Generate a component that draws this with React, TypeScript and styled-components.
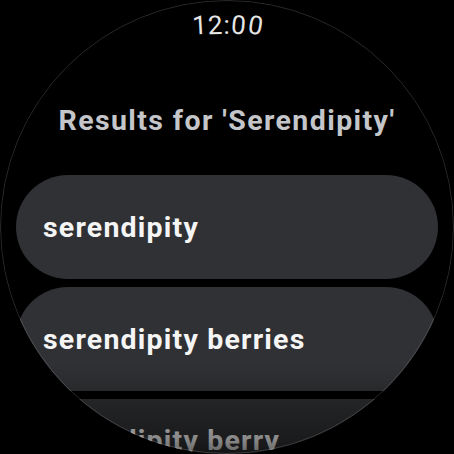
import React from 'react';
import styled, { createGlobalStyle } from 'styled-components';

const GlobalStyle = createGlobalStyle`
    html, body {
        margin: 0;
        padding: 0;
        background: #000;
    }
    body {
        font-family: Roboto, "Noto Sans", "Liberation Sans", sans-serif;
    }
`;

const Screen = styled.div`
    position: relative;
    width: 454px;
    height: 454px;
    border-radius: 50%;
    overflow: hidden;
    background: #000;
    display: flex;
    flex-direction: column;
    align-items: center;

    &::after {
        content: '';
        position: absolute;
        inset: 0;
        border-radius: 50%;
        border: 1px solid rgba(255, 255, 255, 0.16);
        pointer-events: none;
    }
`;

const Vignette = styled.div`
    position: absolute;
    inset: 0;
    pointer-events: none;
    background:
        linear-gradient(
            to bottom,
            rgba(0, 0, 0, 0) 0%,
            rgba(0, 0, 0, 0) 80%,
            rgba(0, 0, 0, 0.12) 85%,
            rgba(0, 0, 0, 0.28) 89%,
            rgba(0, 0, 0, 0.45) 97%,
            rgba(0, 0, 0, 0.6) 100%
        ),
        radial-gradient(
            circle at center,
            rgba(0, 0, 0, 0) 93%,
            rgba(0, 0, 0, 0.6) 100%
        );
`;

const Time = styled.div`
    margin-top: 10px;
    display: flex;
    align-items: flex-end;
    font-size: 26px;
    line-height: 30px;
    color: #e6e6e6;
    letter-spacing: 0.5px;
`;

const TimeChar = styled.span<{ $tilt: number }>`
    display: inline-block;
    transform-origin: 50% 100%;
    transform: rotate(${p => p.$tilt}deg);
`;

const Title = styled.h1`
    margin: 64px 0 0;
    font-size: 28.5px;
    line-height: 34px;
    font-weight: 700;
    letter-spacing: 1.4px;
    color: #c5c6ca;
    white-space: nowrap;
`;

const List = styled.div`
    margin-top: 37px;
    align-self: stretch;
    display: flex;
    flex-direction: column;
    gap: 8px;
    padding: 0 16px;
`;

const Chip = styled.div<{ $edge?: boolean }>`
    box-sizing: border-box;
    height: 104px;
    border-radius: 52px;
    background: #303134;
    padding: ${p => (p.$edge ? '25px' : '36px')} 27px 0;
    flex-shrink: 0;
`;

const ChipLabel = styled.span`
    display: block;
    font-size: 28.5px;
    line-height: 34px;
    font-weight: 700;
    letter-spacing: 1.2px;
    color: #f5f5f5;
    white-space: nowrap;
`;

const clock = '12:00';
const tilts = [-3, -1, 0, 5, 9];

const results = ['serendipity', 'serendipity berries', 'serendipity berry'];

const App = () => (
    <>
        <GlobalStyle />
        <Screen>
            <Time>
                {clock.split('').map((c, i) => (
                    <TimeChar key={i} $tilt={tilts[i]}>
                        {c}
                    </TimeChar>
                ))}
            </Time>
            <Title>Results for 'Serendipity'</Title>
            <List>
                {results.map((r, i) => (
                    <Chip key={r} $edge={i === results.length - 1}>
                        <ChipLabel>{r}</ChipLabel>
                    </Chip>
                ))}
            </List>
            <Vignette />
        </Screen>
    </>
);

export default App;
